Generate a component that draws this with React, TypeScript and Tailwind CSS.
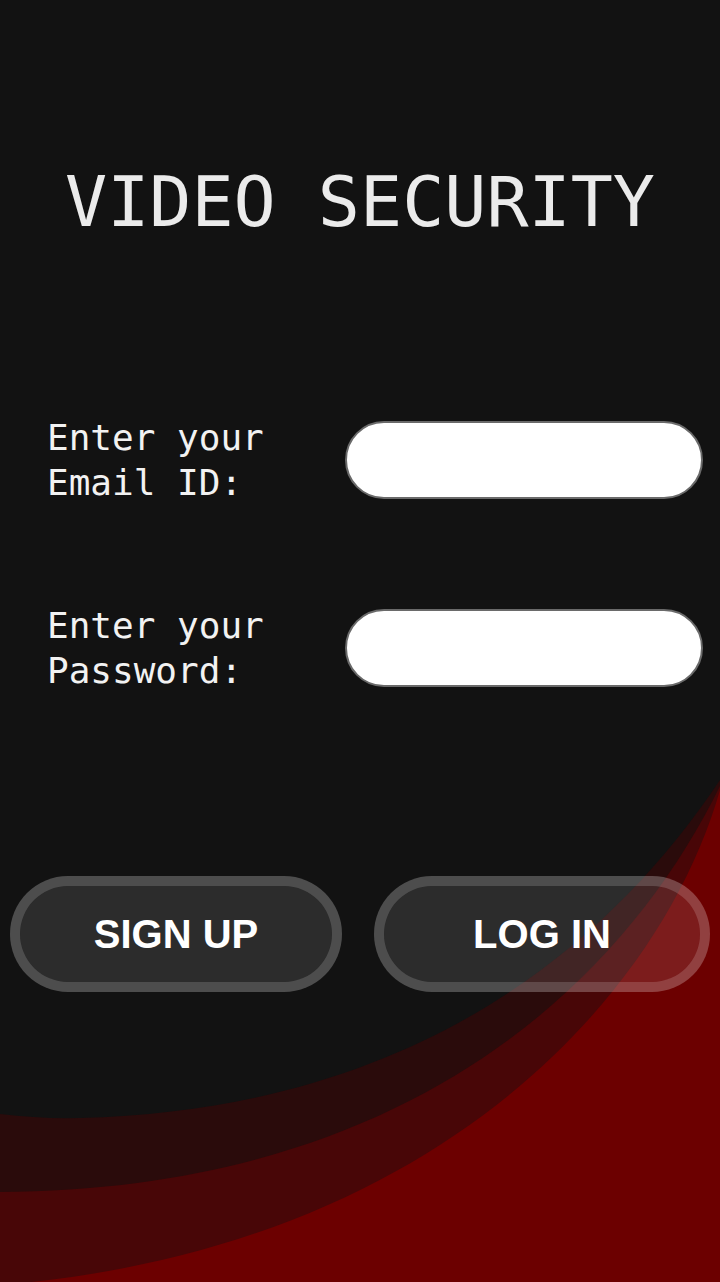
import React from "react";

const mono = { fontFamily: '"DejaVu Sans Mono", "Liberation Mono", monospace' };
const sans = { fontFamily: '"Liberation Sans", Arial, sans-serif' };

const Backdrop = () => (
  <svg
    className="absolute inset-0 h-full w-full"
    viewBox="0 0 720 1282"
    preserveAspectRatio="none"
    aria-hidden="true"
  >
    <path d="M720 780 C600 960 400 1110 80 1118 Q40 1119 0 1114 L0 1282 L720 1282 Z" fill="#2a0b0b" />
    <path d="M720 786 C620 990 400 1190 0 1192 L0 1282 L720 1282 Z" fill="#480607" />
    <path d="M720 790 C660 1000 430 1250 0 1285 L720 1285 Z" fill="#6c0000" />
  </svg>
);

interface FieldRowProps {
  first: string;
  second: string;
  type: string;
}

const FieldRow = ({ first, second, type }: FieldRowProps) => (
  <div className="flex items-center pl-[47px] pr-[17px]">
    <label className="flex-1 text-[36px] leading-[45px] text-[#f2f2f2]" style={mono}>
      {first}
      <br />
      {second}
    </label>
    <input
      type={type}
      className="h-[78px] w-[358px] rounded-full border-2 border-[#6a6a6a] bg-white px-6 text-2xl text-black outline-none"
    />
  </div>
);

const PillButton = ({ label, width }: { label: string; width: string }) => (
  <button
    className={`flex h-[116px] ${width} items-center justify-center rounded-full border-[10px] border-white/25 bg-white/[0.11] bg-clip-padding text-[40px] font-bold text-white`}
    style={sans}
  >
    {label}
  </button>
);

export default function App() {
  return (
    <div className="relative h-[1282px] w-full overflow-hidden bg-[#121212]">
      <Backdrop />
      <div className="relative flex flex-col">
        <h1
          className="pt-[167px] text-center text-[70px] leading-none font-normal text-[#ebebeb]"
          style={mono}
        >
          VIDEO SECURITY
        </h1>

        <div className="mt-[178px] flex flex-col gap-[98px]">
          <FieldRow first="Enter your" second="Email ID:" type="email" />
          <FieldRow first="Enter your" second="Password:" type="password" />
        </div>

        <div className="mt-[183px] flex items-center pl-[10px]">
          <PillButton label="SIGN UP" width="w-[332px]" />
          <div className="w-[32px]" />
          <PillButton label="LOG IN" width="w-[336px]" />
        </div>
      </div>
    </div>
  );
}
